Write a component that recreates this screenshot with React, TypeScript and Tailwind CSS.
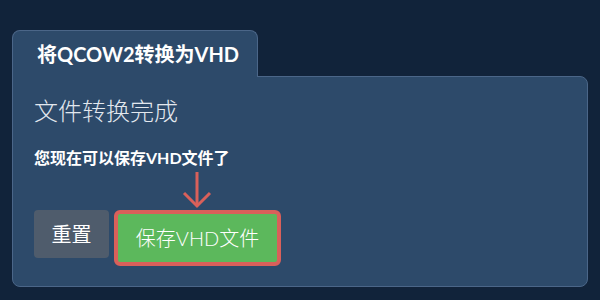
import React from 'react'

const font = { fontFamily: 'Lato, "Noto Sans CJK SC", sans-serif' }

function DownArrow() {
  return (
    <svg width="32" height="38" viewBox="0 0 32 38" className="block" aria-hidden="true">
      <path d="M16 1 L16 35" stroke="#d9605a" strokeWidth="3" fill="none" />
      <path d="M3 22 L16 35 L29 22" stroke="#d9605a" strokeWidth="3" fill="none" />
    </svg>
  )
}

export default function App() {
  return (
    <div className="h-[300px] w-[600px] overflow-hidden bg-[#11233a] px-[12px] pt-[30px]" style={font}>
      <div className="relative z-10 -mb-px flex h-[47px] w-[246px] items-center rounded-t-lg border border-b-0 border-[#4b6688] bg-[#2d4a6a] pl-[24px]">
        <h1 className="text-[20px] font-bold leading-none text-white">将QCOW2转换为VHD</h1>
      </div>
      <section className="h-[211px] w-[576px] rounded-lg rounded-tl-none border border-[#4b6688] bg-[#2d4a6a] px-[21px] pt-[19px]">
        <h2 className="text-[24px] font-extralight leading-[30px] text-[#e3e8ee]">文件转换完成</h2>
        <p className="mt-[21px] text-[16px] font-bold leading-[22px] text-white">您现在可以保存VHD文件了</p>
        <div className="ml-[147px] mt-[2px] h-[39px]">
          <DownArrow />
        </div>
        <div className="flex items-start gap-[5px]">
          <button
            type="button"
            className="h-[48px] w-[75px] rounded bg-[#4f5c6c] text-[20px] text-white"
          >
            重置
          </button>
          <button
            type="button"
            className="h-[56px] w-[167px] rounded-md border-4 border-[#d9605a] bg-[#5cb85c] text-[20px] font-light text-white"
          >
            保存VHD文件
          </button>
        </div>
      </section>
    </div>
  )
}
